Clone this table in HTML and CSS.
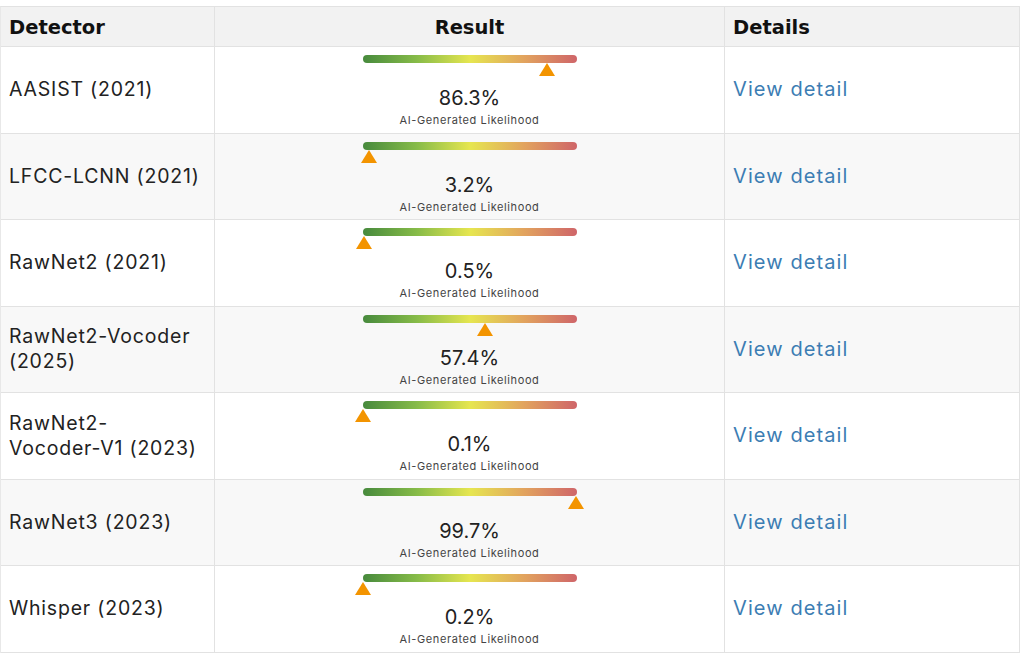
FILE: index.html
```html
<!DOCTYPE html>
<html lang="en">
<head>
<meta charset="utf-8">
<title>Detector results</title>
<link rel="stylesheet" href="styles.css">
</head>
<body>
<div class="table">
  <div class="row head">
    <div class="cell c1">Detector</div>
    <div class="cell c2 center">Result</div>
    <div class="cell c3">Details</div>
  </div>

  <div class="row">
    <div class="cell c1">AASIST (2021)</div>
    <div class="cell c2 gauge-cell">
      <div class="gauge"><div class="bar"></div><span class="marker" style="left:86.3%"></span></div>
      <div class="pct">86.3%</div>
      <div class="lbl">AI-Generated Likelihood</div>
    </div>
    <div class="cell c3"><a class="link" href="#">View detail</a></div>
  </div>

  <div class="row alt">
    <div class="cell c1">LFCC-LCNN (2021)</div>
    <div class="cell c2 gauge-cell">
      <div class="gauge"><div class="bar"></div><span class="marker" style="left:3.2%"></span></div>
      <div class="pct">3.2%</div>
      <div class="lbl">AI-Generated Likelihood</div>
    </div>
    <div class="cell c3"><a class="link" href="#">View detail</a></div>
  </div>

  <div class="row">
    <div class="cell c1">RawNet2 (2021)</div>
    <div class="cell c2 gauge-cell">
      <div class="gauge"><div class="bar"></div><span class="marker" style="left:0.5%"></span></div>
      <div class="pct">0.5%</div>
      <div class="lbl">AI-Generated Likelihood</div>
    </div>
    <div class="cell c3"><a class="link" href="#">View detail</a></div>
  </div>

  <div class="row alt">
    <div class="cell c1">RawNet2-Vocoder<br>(2025)</div>
    <div class="cell c2 gauge-cell">
      <div class="gauge"><div class="bar"></div><span class="marker" style="left:57.4%"></span></div>
      <div class="pct">57.4%</div>
      <div class="lbl">AI-Generated Likelihood</div>
    </div>
    <div class="cell c3"><a class="link" href="#">View detail</a></div>
  </div>

  <div class="row">
    <div class="cell c1">RawNet2-<br>Vocoder-V1 (2023)</div>
    <div class="cell c2 gauge-cell">
      <div class="gauge"><div class="bar"></div><span class="marker" style="left:0.1%"></span></div>
      <div class="pct">0.1%</div>
      <div class="lbl">AI-Generated Likelihood</div>
    </div>
    <div class="cell c3"><a class="link" href="#">View detail</a></div>
  </div>

  <div class="row alt">
    <div class="cell c1">RawNet3 (2023)</div>
    <div class="cell c2 gauge-cell">
      <div class="gauge"><div class="bar"></div><span class="marker" style="left:99.7%"></span></div>
      <div class="pct">99.7%</div>
      <div class="lbl">AI-Generated Likelihood</div>
    </div>
    <div class="cell c3"><a class="link" href="#">View detail</a></div>
  </div>

  <div class="row">
    <div class="cell c1">Whisper (2023)</div>
    <div class="cell c2 gauge-cell">
      <div class="gauge"><div class="bar"></div><span class="marker" style="left:0.2%"></span></div>
      <div class="pct">0.2%</div>
      <div class="lbl">AI-Generated Likelihood</div>
    </div>
    <div class="cell c3"><a class="link" href="#">View detail</a></div>
  </div>
</div>
</body>
</html>
```

FILE: styles.css
```css
html, body {
  margin: 0;
  padding: 0;
  background: #ffffff;
}
body {
  padding-top: 6px;
  font-family: "Inter", "DejaVu Sans", sans-serif;
  color: #222222;
}
.table {
  width: 1020px;
  border-top: 1px solid #e2e2e2;
  border-left: 1px solid #e8e8e8;
  border-right: 1px solid #e2e2e2;
  box-sizing: border-box;
}
.row {
  display: grid;
  grid-template-columns: 214px 510px 1fr;
  height: 86.5px;
  border-bottom: 1px solid #e2e2e2;
  box-sizing: border-box;
  background: #ffffff;
}
.row.alt {
  background: #f8f8f8;
}
.row.head {
  height: 40px;
  background: #f2f2f2;
  font-family: "DejaVu Sans", "Inter", sans-serif;
  font-weight: 700;
  color: #111111;
}
.cell {
  display: flex;
  flex-direction: column;
  justify-content: center;
  padding: 0 8px;
  box-sizing: border-box;
  font-size: 19.5px;
  line-height: 25px;
  letter-spacing: 0.8px;
  border-right: 1px solid #e2e2e2;
}
.row.head .cell {
  font-size: 19.5px;
  letter-spacing: 0;
  padding-top: 1px;
}
.cell.c3 {
  border-right: none;
}
.cell.center {
  align-items: center;
}
.gauge-cell {
  justify-content: flex-start;
  align-items: center;
  padding-top: 8px;
  letter-spacing: 0;
}
.gauge {
  position: relative;
  width: 214px;
  height: 22px;
}
.bar {
  height: 8px;
  border-radius: 4px;
  background: linear-gradient(to right, #478a3d 0%, #86bb48 25%, #e6e650 50%, #e2a45e 75%, #cf6569 100%);
}
.marker {
  position: absolute;
  top: 8px;
  width: 0;
  height: 0;
  margin-left: -8px;
  border-left: 8px solid transparent;
  border-right: 8px solid transparent;
  border-bottom: 13px solid #f39400;
}
.pct {
  margin-top: 9px;
  font-size: 20px;
  line-height: 24px;
  color: #222222;
}
.lbl {
  margin-top: 3px;
  font-size: 11px;
  line-height: 14px;
  letter-spacing: 0.6px;
  color: #444444;
}
.link {
  color: #3c7db3;
  text-decoration: none;
  font-size: 20px;
  letter-spacing: 1.1px;
}
```
